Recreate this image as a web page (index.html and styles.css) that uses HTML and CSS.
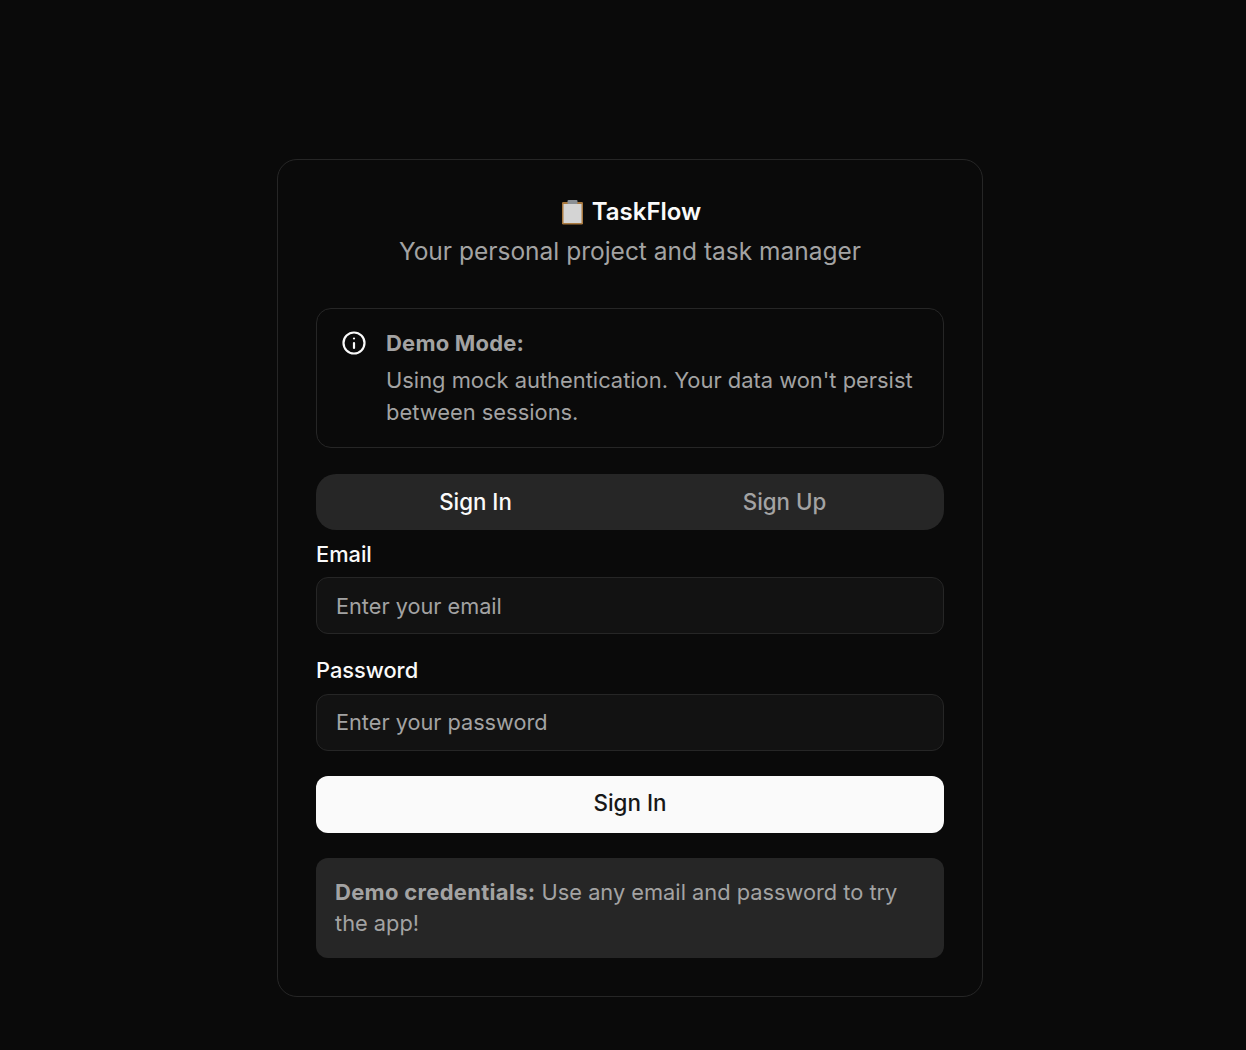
FILE: index.html
```html
<!DOCTYPE html>
<html lang="en">
<head>
    <meta charset="UTF-8">
    <title>TaskFlow</title>
    <link rel="stylesheet" href="styles.css">
</head>
<body>
    <div class="card">
        <div class="header">
            <h1 class="title">
                <svg class="clipboard" width="23" height="26" viewBox="0 0 23 26">
                    <rect x="1" y="3" width="21" height="22.5" rx="1.2" fill="#a9793f"/>
                    <rect x="2.5" y="5" width="18" height="19" fill="#d4d4d4"/>
                    <rect x="6.5" y="1" width="10" height="4" rx="1" fill="#8a8f94"/>
                </svg>
                <span>TaskFlow</span>
            </h1>
            <p class="subtitle">Your personal project and task manager</p>
        </div>

        <div class="alert">
            <svg class="alert-icon" width="24" height="24" viewBox="0 0 24 24" fill="none" stroke="#fafafa" stroke-width="2.2" stroke-linecap="round" stroke-linejoin="round">
                <circle cx="12" cy="12" r="10.5"/>
                <path d="M12 17v-5"/>
                <path d="M12 7.5h.01"/>
            </svg>
            <div class="alert-body">
                <div class="alert-title">Demo Mode:</div>
                <div class="alert-text">Using mock authentication. Your data won't persist between sessions.</div>
            </div>
        </div>

        <div class="tabs">
            <div class="tab active">Sign In</div>
            <div class="tab">Sign Up</div>
        </div>

        <form class="form">
            <div class="form-group">
                <label for="email">Email</label>
                <input type="email" id="email" placeholder="Enter your email">
            </div>
            <div class="form-group">
                <label for="password">Password</label>
                <input type="password" id="password" placeholder="Enter your password">
            </div>
            <button type="button">Sign In</button>
        </form>

        <div class="note"><strong>Demo credentials:</strong> Use any email and password to try the app!</div>
    </div>
</body>
</html>
```

FILE: styles.css
```css
* {
    box-sizing: border-box;
}
body {
    margin: 0;
    min-height: 1050px;
    padding: 159px 263px 0 277px;
    background-color: #0a0a0a;
    color: #fafafa;
    font-family: Inter, "Noto Sans", sans-serif;
}
.card {
    width: 706px;
    height: 838px;
    padding: 38px;
    border: 1px solid #262626;
    border-radius: 20px;
}
.header {
    text-align: center;
}
.title {
    display: flex;
    justify-content: center;
    align-items: center;
    gap: 8px;
    margin: 0;
    padding-left: 2px;
    height: 28px;
    font-size: 24px;
    line-height: 26px;
    font-weight: 600;
}
.subtitle {
    margin: 9px 0 0;
    font-size: 24.5px;
    line-height: 32px;
    color: #a3a3a3;
}
.alert {
    display: flex;
    gap: 20px;
    height: 140px;
    margin-top: 41px;
    padding: 18px 25px;
    border: 1px solid #262626;
    border-radius: 15px;
}
.alert-icon {
    flex-shrink: 0;
    margin-top: 4px;
}
.alert-title {
    font-size: 22px;
    line-height: 32px;
    font-weight: 700;
    letter-spacing: 0.2px;
    color: #a3a3a3;
}
.alert-text {
    margin-top: 5px;
    font-size: 21.9px;
    line-height: 32px;
    color: #a3a3a3;
}
.tabs {
    display: flex;
    height: 56px;
    margin-top: 26px;
    padding: 5px;
    background-color: #262626;
    border-radius: 20px;
}
.tab {
    flex: 1;
    display: flex;
    align-items: center;
    justify-content: center;
    padding-bottom: 2px;
    font-size: 22.3px;
    font-weight: 500;
    color: #a3a3a3;
}
.tab.active {
    color: #fafafa;
}
.form {
    display: flex;
    flex-direction: column;
}
.form-group {
    margin-bottom: 25px;
}
.form-group:first-child {
    margin-bottom: 13px;
}
label {
    display: block;
    height: 47px;
    padding-top: 10px;
    font-size: 21.8px;
    line-height: 28px;
    font-weight: 500;
}
.form-group:nth-child(2) label {
    padding-top: 9px;
}
input {
    display: block;
    width: 100%;
    height: 57px;
    padding: 0 19px;
    background-color: #121212;
    border: 1px solid #262626;
    border-radius: 12px;
    color: #fafafa;
    font-family: inherit;
    font-size: 21.7px;
}
#password {
    padding-bottom: 2px;
}
input::placeholder {
    color: #a3a3a3;
}
button {
    height: 57px;
    padding-bottom: 5px;
    background-color: #fafafa;
    color: #171717;
    border: none;
    border-radius: 12px;
    font-family: inherit;
    font-size: 22.4px;
    font-weight: 500;
}
.note {
    height: 100px;
    margin-top: 25px;
    padding: 19px;
    background-color: #262626;
    border-radius: 12px;
    font-size: 21.8px;
    line-height: 31px;
    color: #a3a3a3;
}
.note strong {
    font-size: 22px;
    letter-spacing: 0.3px;
}
```
